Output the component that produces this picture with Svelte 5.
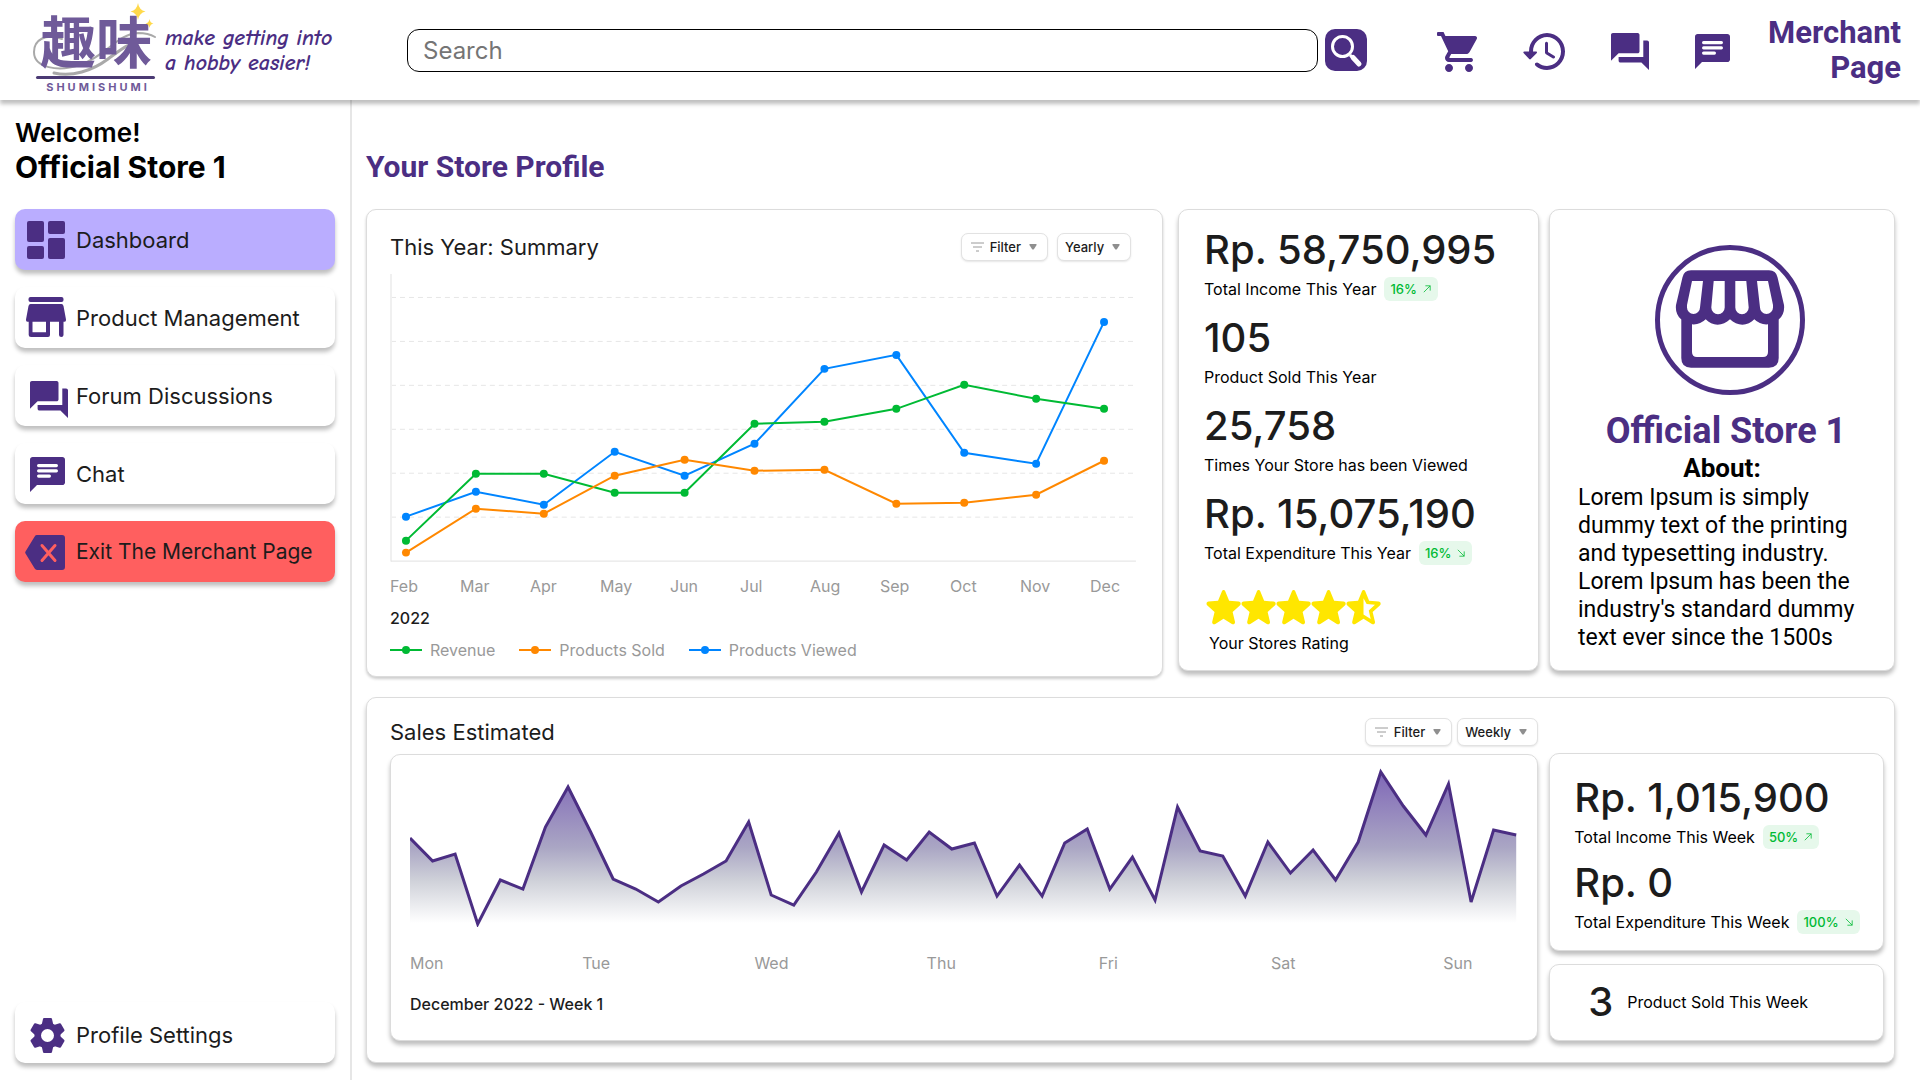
<script>
  const months = ['Feb', 'Mar', 'Apr', 'May', 'Jun', 'Jul', 'Aug', 'Sep', 'Oct', 'Nov', 'Dec'];
  const days = ['Mon', 'Tue', 'Wed', 'Thu', 'Fri', 'Sat', 'Sun'];

  const xs = [16, 86, 154, 225, 295, 365, 435, 507, 575, 647, 715];
  const series = [
    { name: 'Products Viewed', color: '#0085ff', ys: [244, 219, 232, 179, 203, 171, 96, 82, 180, 191, 49] },
    { name: 'Revenue', color: '#00ba34', ys: [268, 201, 201, 220, 220, 151, 149, 136, 112, 126, 136] },
    { name: 'Products Sold', color: '#ff8800', ys: [280, 236, 241, 203, 187, 198, 197, 231, 230, 222, 188] }
  ];
  const legend = [series[1], series[2], series[0]];
  const gridLines = [25, 69, 113, 157, 201, 245];

  const sales = [
    83, 106, 99, 169, 125, 134, 72, 32, 77, 124, 134, 147, 131, 119, 106, 67, 140, 150, 117, 78,
    137, 90, 105, 77, 94, 88, 141, 110, 141, 88, 74, 134, 102, 145, 52, 96, 101, 141, 87, 118,
    95, 125, 87, 17, 51, 80, 29, 147, 75, 80
  ];
  const salesPoints = sales.map((y, i) => `${((i * 1106) / 49).toFixed(1)},${y}`).join(' ');

  const yearly = [
    { value: 'Rp. 58,750,995', label: 'Total Income This Year', change: '16%', up: true },
    { value: '105', label: 'Product Sold This Year' },
    { value: '25,758', label: 'Times Your Store has been Viewed' },
    { value: 'Rp. 15,075,190', label: 'Total Expenditure This Year', change: '16%', up: false }
  ];
  const weekly = [
    { value: 'Rp. 1,015,900', label: 'Total Income This Week', change: '50%', up: true },
    { value: 'Rp. 0', label: 'Total Expenditure This Week', change: '100%', up: false }
  ];

  const menu = [
    { label: 'Dashboard', icon: 'dashboard', tone: 'active' },
    { label: 'Product Management', icon: 'store', tone: '' },
    { label: 'Forum Discussions', icon: 'forum', tone: '' },
    { label: 'Chat', icon: 'chat', tone: '' },
    { label: 'Exit The Merchant Page', icon: 'exit', tone: 'danger' }
  ];

  const starPath =
    'M12 17.3l-4.2 2.6c-.9.5-1.8-.1-1.6-1.1l1.2-4.8-3.7-3.2c-.8-.7-.4-1.8.6-1.9l4.9-.4 1.9-4.5c.4-1 1.5-1 1.9 0l1.9 4.5 4.9.4c1 .1 1.400 1.200.6 1.900l-3.700 3.200 1.200 4.800c.2 1-.7 1.600-1.600 1.100z';
</script>

{#snippet forumShape()}
  <path d="M21 6h-2v9H6v2c0 .55.45 1 1 1h11l4 4V7c0-.55-.45-1-1-1zm-4 6V3c0-.55-.45-1-1-1H3c-.55 0-1 .45-1 1v14l4-4h10c.55 0 1-.45 1-1z" />
{/snippet}

{#snippet chatShape()}
  <path d="M20.500 2H3.500C2.700 2 2 2.700 2 3.500V22l4-4h14.500c.8 0 1.500-.7 1.500-1.500v-13c0-.8-.7-1.500-1.500-1.500z" />
  <g fill="#fff">
    <rect x="6" y="6" width="12" height="1.8" rx=".9" />
    <rect x="6" y="9" width="12" height="1.8" rx=".9" />
    <rect x="6" y="12" width="8" height="1.8" rx=".9" />
  </g>
{/snippet}

{#snippet menuIcon(name)}
  <svg class="menu-icon" viewBox="0 0 50 50" aria-hidden="true">
    {#if name === 'dashboard'}
      <rect x="6" y="6" width="17" height="21" rx="2" />
      <rect x="6" y="31" width="17" height="13" rx="2" />
      <rect x="27" y="6" width="17" height="13" rx="2" />
      <rect x="27" y="23" width="17" height="21" rx="2" />
    {:else if name === 'store'}
      <rect x="7.500" y="4" width="35" height="5" rx="2" />
      <path d="M9.500 11h31q1.500 0 2 2l2.500 13.500q.3 2.200-1.500 2.200h-1V42q0 2-2.200 2T38 42V28.700h-9V42q0 2-2 2H10q-2.300 0-2.300-2V28.700h-1.200q-1.800 0-1.500-2.200L7.500 13q.5-2 2-2zM11.500 28.700v10.600H25V28.700z" />
    {:else if name === 'forum'}
      <svg x="9" y="10" width="38" height="37" viewBox="2 2 20 20" preserveAspectRatio="none">{@render forumShape()}</svg>
    {:else if name === 'chat'}
      <svg x="9" y="8" width="35" height="35" viewBox="2 2 20 20">{@render chatShape()}</svg>
    {:else if name === 'exit'}
      <path d="M16 8h25q3 0 3 3v29q0 3-3 3H16q-1.500 0-2.300-1.400L4.500 26.500q-.7-1 0-2L13.700 9.400Q14.500 8 16 8z" />
      <path d="M21 18.500l13 15M34 18.500l-13 15" stroke="#ff5f5f" stroke-width="3" stroke-linecap="round" />
    {:else}
      <g transform="translate(26.500 25.500)">
        {#each [0, 60, 120, 180, 240, 300] as a}
          <path d="M-6 -10L-4.500 -16.500Q-4.300 -17.500 -3.500 -17.500H3.500Q4.300 -17.500 4.500 -16.500L6 -10Z" transform="rotate({a})" />
        {/each}
        <path fill-rule="evenodd" d="M0-13a13 13 0 1 0 0 26 13 13 0 1 0 0-26zM0-6.500a6.500 6.500 0 1 1 0 13 6.500 6.500 0 1 1 0-13z" />
      </g>
    {/if}
  </svg>
{/snippet}

{#snippet caret()}
  <svg class="caret" viewBox="0 0 9 7" aria-hidden="true"><path d="M1 0h7q1 .2.700 1.200L5.500 6q-1 1-2 0L.3 1.200Q0 .2 1 0z" /></svg>
{/snippet}

{#snippet filterButton()}
  <button class="control">
    <svg class="filter-icon" viewBox="0 0 13 10" aria-hidden="true"><path d="M0 1h13M2 5h9M5 9h3" /></svg>
    Filter
    {@render caret()}
  </button>
{/snippet}

{#snippet stat(item)}
  <div class="stat">
    <div class="value">{item.value}</div>
    <div class="stat-label">
      {item.label}
      {#if item.change}
        <span class="badge">
          {item.change}
          <svg viewBox="0 0 10 10" aria-hidden="true">
            {#if item.up}
              <path d="M1 9L9 1M3 1h6v6" />
            {:else}
              <path d="M1 1l8 8M9 3v6H3" />
            {/if}
          </svg>
        </span>
      {/if}
    </div>
  </div>
{/snippet}

<div class="page">
  <header>
    <a class="brand" href="#home">
      <svg class="logo" viewBox="0 0 130 96" role="img" aria-label="Shumishumi">
        <g fill="none" stroke="#a9a9a9" stroke-linecap="round">
          <path d="M31 37C14 31 3 38 3 50c0 16 24 20 46 13C77 53 86 32 107 31c6 0 12 1 17 4" stroke-width="2" />
          <path d="M23 71c18 4 38-2 54-14 15-11 20-16 39-19" stroke-width="3" />
        </g>
        <text class="kanji" x="9" y="61">趣味</text>
        <rect x="5" y="74" width="119" height="3" rx="1.500" fill="#4b3a74" />
        <text class="wordmark" x="67" y="89" text-anchor="middle">SHUMISHUMI</text>
        <path d="M107 1q1 7 7.500 8.500Q108 11 107 18q-1-7-7.500-8.500Q106 8 107 1zM118.500 17q.6 4 4 4.500-3.400.5-4 4.500-.6-4-4-4.500 3.400-.5 4-4.500z" fill="#ffd94a" />
      </svg>
      <span class="tagline">make getting into<br />a hobby easier!</span>
    </a>

    <form class="search" role="search">
      <input type="search" placeholder="Search" aria-label="Search" />
      <button type="button" aria-label="Search">
        <svg viewBox="0 0 42 42" aria-hidden="true">
          <circle cx="17.500" cy="17.500" r="10" />
          <path d="M25 26l3 3" />
          <path class="handle" d="M28 28.500l6 6.500" />
        </svg>
      </button>
    </form>

    <nav class="shortcuts" aria-label="Shortcuts">
      <a href="#cart" aria-label="Cart">
        <svg width="40" height="40" viewBox="1 2 20 20"><path d="M7 18c-1.100 0-1.990.9-1.990 2S5.900 22 7 22s2-.9 2-2-.9-2-2-2zM1.500 2q-.5 0-.5.500v1q0 .5.5.500H3l3.600 7.590-1.350 2.450C4.520 15.370 5.480 17 7 17h11.200q.8-.2.800-1t-.8-1H7.420c-.14 0-.25-.11-.25-.25l.03-.12.9-1.630h7.450c.75 0 1.410-.41 1.750-1.030l3.580-6.490A1 1 0 0 0 20 4H5.210l-.94-2zM17 18c-1.100 0-1.990.9-1.990 2s.89 2 1.990 2 2-.9 2-2-.9-2-2-2z" /></svg>
      </a>
      <a href="#history" aria-label="History">
        <svg width="42" height="37" viewBox="1 3 21 18" preserveAspectRatio="none"><path d="M13 3c-4.970 0-9 4.030-9 9H1.700q-.9.2-.3.900l2.700 2.800q.4.400.8 0l2.900-2.800q.5-.7-.2-.9H6c0-3.870 3.130-7 7-7s7 3.130 7 7-3.130 7-7 7c-1.600 0-3.100-.55-4.300-1.450q-.8-.5-1.450.1t.1 1.400C8.900 20.300 10.900 21 13 21c4.970 0 9-4.030 9-9s-4.030-9-9-9zm-1 5v4.500q0 .5.5.800l3.500 2.100q.6.200.9-.3t-.1-.9L13.500 12.250V8q-.2-.7-.75-.7T12 8z" /></svg>
      </a>
      <a href="#forum" aria-label="Forum">
        <svg width="38" height="37" viewBox="2 2 20 20" preserveAspectRatio="none">{@render forumShape()}</svg>
      </a>
      <a href="#chat" aria-label="Chat">
        <svg width="35" height="35" viewBox="2 2 20 20">{@render chatShape()}</svg>
      </a>
    </nav>

    <a class="merchant" href="#merchant">Merchant<br />Page</a>
  </header>

  <div class="body">
    <aside>
      <p class="welcome">Welcome!</p>
      <p class="store-name">Official Store 1</p>
      <nav class="menu" aria-label="Merchant menu">
        {#each menu as item}
          <a class="menu-item {item.tone}" href="#{item.icon}">{@render menuIcon(item.icon)}{item.label}</a>
        {/each}
        <a class="menu-item last" href="#settings">{@render menuIcon('gear')}Profile Settings</a>
      </nav>
    </aside>

    <main>
      <h1>Your Store Profile</h1>

      <div class="top-row">
        <section class="card summary">
          <div class="card-head">
            <h2>This Year: Summary</h2>
            <div class="controls">
              {@render filterButton()}
              <span class="control-select">
                <select class="control" aria-label="Summary period"><option>Yearly</option></select>
                {@render caret()}
              </span>
            </div>
          </div>
          <svg class="line-chart" viewBox="0 0 748 290" role="img" aria-label="Revenue, products sold and products viewed by month">
            <g fill="none" stroke="#e6e6e6">
              {#each gridLines as y}
                <path d="M1 {y - 0.5}H747" stroke-dasharray="5 4" />
              {/each}
              <path d="M1 1V289" stroke="#f0f0f0" stroke-width="2" />
              <path d="M1 288.500H747" stroke="#e2e2e2" />
            </g>
            {#each series as s}
              <polyline points={s.ys.map((y, i) => `${xs[i]},${y}`).join(' ')} fill="none" stroke={s.color} stroke-width="2" />
              {#each s.ys as y, i}
                <circle cx={xs[i]} cy={y} r="4" fill={s.color} />
              {/each}
            {/each}
          </svg>
          <div class="months">
            {#each months as m}<span>{m}</span>{/each}
          </div>
          <div class="period">2022</div>
          <ul class="legend">
            {#each legend as s}
              <li>
                <svg viewBox="0 0 32 8" aria-hidden="true"><path d="M0 4h32" stroke={s.color} stroke-width="2" /><circle cx="16" cy="4" r="4" fill={s.color} /></svg>
                {s.name}
              </li>
            {/each}
          </ul>
        </section>

        <div class="side-cards">
          <section class="card stats">
            {#each yearly as item}{@render stat(item)}{/each}
            <div class="rating">
              <div class="stars" role="img" aria-label="4.5 out of 5">
                {#each [0, 1, 2, 3] as n}
                  <svg viewBox="3 3.200 18 17.200" preserveAspectRatio="none"><path d={starPath} /></svg>
                {/each}
                <svg viewBox="3 3.200 18 17.200" preserveAspectRatio="none">
                  <path fill-rule="evenodd" d="{starPath}M12 7.200V15.300l3.700 2.200-1-4.200 3.200-2.800-4.300-.4z" />
                </svg>
              </div>
              <div class="rating-label">Your Stores Rating</div>
            </div>
          </section>

          <section class="card profile">
            <svg class="avatar" viewBox="0 0 150 150" aria-hidden="true">
              <circle cx="75" cy="75" r="72.500" fill="none" stroke="#4b2e83" stroke-width="5" />
              <path fill-rule="evenodd" d="M36 25.300H114Q121 25.300 122.500 32.300L129 60Q130 69 123.700 74.500V113Q123.700 122.700 114 122.700H36Q26.300 122.700 26.300 113V74.500Q20 69 21 60L27.500 32.300Q29 25.300 36 25.300Z
                M37 36H48L45 62.500a6.500 6.500 0 0 1-13 0V60Z
                M58.700 36H69.700V62.500a6.700 6.700 0 0 1-13.400 0Z
                M80.300 36H91.300L93.700 62.500a6.700 6.700 0 0 1-13.400 0Z
                M102 36H113L118 60V62.500a6.500 6.500 0 0 1-13 0Z
                M37 79.300Q45 80 50.700 74.300C57 81.500 68 81.500 75 74.300C82 81.500 93 81.500 99.300 74.300Q105 80 113 79.300V107Q113 112 108 112H42Q37 112 37 107Z" />
            </svg>
            <h2 class="profile-name">Official Store 1</h2>
            <h3>About:</h3>
            <p>Lorem Ipsum is simply dummy text of the printing and typesetting industry. Lorem Ipsum has been the industry's standard dummy text ever since the 1500s</p>
          </section>
        </div>
      </div>

      <section class="card sales">
        <div class="sales-left">
          <div class="sales-head">
            <h2>Sales Estimated</h2>
            <div class="controls tight">
              {@render filterButton()}
              <span class="control-select">
                <select class="control wide" aria-label="Sales period"><option>Weekly</option></select>
                {@render caret()}
              </span>
            </div>
          </div>
          <div class="card sales-chart">
            <svg class="area-chart" viewBox="0 0 1107 172" role="img" aria-label="Estimated sales by day">
              <defs>
                <linearGradient id="area-fill" gradientUnits="userSpaceOnUse" x1="0" y1="17" x2="0" y2="168">
                  <stop offset="0" stop-color="#7f67b7" />
                  <stop offset=".5" stop-color="#aaa6c4" />
                  <stop offset=".72" stop-color="#cfd1d9" />
                  <stop offset="1" stop-color="#fff" />
                </linearGradient>
              </defs>
              <polygon points="0,168 {salesPoints} 1106,168" fill="url(#area-fill)" />
              <polyline points={salesPoints} fill="none" stroke="#4b2e83" stroke-width="3" />
            </svg>
            <div class="days">
              {#each days as d}<span>{d}</span>{/each}
            </div>
            <div class="period week">December 2022 - Week 1</div>
          </div>
        </div>
        <div class="sales-right">
          <div class="card week-stats">
            {#each weekly as item}{@render stat(item)}{/each}
          </div>
          <div class="card sold">
            <span class="value">3</span>
            <span>Product Sold This Week</span>
          </div>
        </div>
      </section>
    </main>
  </div>
</div>

<style>
  :global(body) {
    margin: 0;
    background: #fff;
  }
  .page,
  .page * {
    box-sizing: border-box;
  }
  .page {
    min-height: 100vh;
    display: flex;
    flex-direction: column;
    font-family: Inter, 'Liberation Sans', sans-serif;
    font-optical-sizing: none;
    font-size: 16px;
    line-height: 24px;
    color: #000;
  }
  .page a {
    color: inherit;
    text-decoration: none;
  }
  h1, h2, h3, p, ul {
    margin: 0;
    padding: 0;
    font-weight: 400;
  }
  button, input, select {
    font-family: inherit;
    margin: 0;
  }
  svg {
    display: block;
    flex: none;
    fill: #4b2e83;
  }

  header {
    height: 100px;
    display: flex;
    align-items: center;
    padding: 0 19px 0 31px;
    box-shadow: 0 4px 4px rgba(0, 0, 0, 0.25);
    position: relative;
  }
  .brand {
    display: flex;
    align-items: center;
    gap: 4px;
    width: 376px;
    flex: none;
  }
  .logo {
    width: 130px;
    height: 96px;
    overflow: visible;
  }
  .kanji {
    font: 700 56px 'Noto Sans CJK JP', sans-serif;
    fill: #6f5a99;
  }
  .wordmark {
    font: 700 11px Inter, sans-serif;
    letter-spacing: 3px;
    fill: #6f5a99;
  }
  .tagline {
    padding-top: 2px;
    font: italic 700 22px/25px 'Comic Neue', 'Comic Sans MS', 'Open Sans', sans-serif;
    color: #4b2e83;
    white-space: nowrap;
  }
  .search {
    flex: 1;
    display: flex;
    gap: 7px;
  }
  .search input {
    flex: 1;
    min-width: 0;
    height: 43px;
    border: 1px solid #000;
    border-radius: 12px;
    padding: 0 15px;
    font-size: 24px;
    background: #fff;
    appearance: none;
    outline: none;
  }
  .search input::placeholder {
    color: #757575;
    opacity: 1;
  }
  .search button {
    width: 42px;
    height: 42px;
    border: 0;
    border-radius: 10px;
    padding: 0;
    background: #4b2e83;
  }
  .search svg {
    fill: none;
    stroke: #fff;
    stroke-width: 3;
  }
  .search .handle {
    stroke-width: 5;
    stroke-linecap: round;
  }
  .shortcuts {
    display: flex;
    align-items: center;
    gap: 46px;
    margin-left: 70px;
    padding-top: 3px;
  }
  .merchant {
    margin-left: 38px;
    font: 700 31px/35px Roboto, sans-serif;
    text-align: right;
  }
  .page .merchant {
    color: #4b2e83;
  }

  .body {
    flex: 1;
    display: flex;
  }
  aside {
    width: 352px;
    flex: none;
    padding: 17px 15px 17px 15px;
    border-right: 2px solid #e6e6e6;
    display: flex;
    flex-direction: column;
  }
  .welcome {
    font-size: 26px;
    line-height: 32px;
    font-weight: 600;
  }
  .store-name {
    font-size: 30px;
    line-height: 36px;
    font-weight: 700;
  }
  .menu {
    flex: 1;
    display: flex;
    flex-direction: column;
    gap: 17px;
    margin-top: 24px;
  }
  .menu-item {
    height: 61px;
    display: flex;
    align-items: center;
    gap: 5px;
    padding-left: 6px;
    border-radius: 10px;
    background: #fff;
    box-shadow: 0 4px 4px rgba(0, 0, 0, 0.25);
    font-size: 22px;
  }
  .page .menu-item {
    color: #1c1c1c;
  }
  .menu-icon {
    width: 50px;
    height: 50px;
  }
  .active {
    background: #baadff;
  }
  .danger {
    background: #ff5f5f;
    font-size: 21px;
  }
  .last {
    margin-top: auto;
    padding-top: 4px;
  }

  main {
    flex: 1;
    min-width: 0;
    padding: 49px 25px 17px 14px;
  }
  h1 {
    font: 700 30px/36px Roboto, sans-serif;
    color: #4b2e83;
    margin-bottom: 24px;
  }
  .card {
    border: 1px solid #dcdcdc;
    border-radius: 10px;
    background: #fff;
    box-shadow: 0 4px 4px rgba(0, 0, 0, 0.25);
  }
  .top-row {
    display: grid;
    grid-template-columns: 797fr 717fr;
    gap: 15px;
    align-items: start;
    margin-bottom: 20px;
  }
  .side-cards {
    display: grid;
    grid-template-columns: 361fr 346fr;
    gap: 10px;
  }
  .summary {
    padding: 23px 25px 14px 23px;
    box-shadow: 0 2px 3px rgba(0, 0, 0, 0.2);
  }
  .card-head,
  .sales-head {
    display: flex;
    justify-content: space-between;
    align-items: center;
    height: 28px;
  }
  .card-head {
    padding-right: 6px;
    margin-bottom: 12px;
  }
  .sales-head {
    margin-bottom: 8px;
  }
  h2 {
    font-size: 22px;
    color: #1c1c1c;
  }
  .controls {
    display: flex;
    gap: 9px;
  }
  .tight {
    gap: 5px;
  }
  .control {
    height: 28px;
    display: flex;
    align-items: center;
    gap: 6px;
    padding: 0 10px 0 9px;
    border: 1px solid #e2e2e2;
    border-radius: 7px;
    background: #fff;
    box-shadow: 0 1px 2px rgba(0, 0, 0, 0.1);
    font-size: 13px;
    font-weight: 500;
    color: #1c1c1c;
  }
  .control .caret {
    margin-left: 2px;
  }
  .control-select {
    display: grid;
    align-items: center;
  }
  .control-select > :global(*) {
    grid-area: 1 / 1;
  }
  .control-select .caret {
    justify-self: end;
    margin-right: 11px;
    pointer-events: none;
  }
  select.control {
    appearance: none;
    width: 74px;
    padding: 0 0 0 7px;
  }
  select.wide {
    width: 81px;
  }
  .caret {
    width: 8px;
    height: 6px;
    fill: #8f8f8f;
  }
  .filter-icon {
    width: 13px;
    height: 10px;
    fill: none;
    stroke: #9a9a9a;
    stroke-width: 1;
  }
  .line-chart,
  .area-chart {
    width: 100%;
    height: auto;
  }
  .months,
  .days {
    display: grid;
    color: #999;
  }
  .months {
    grid-template-columns: repeat(10, 1fr) 30px;
    margin: 11px 17px 8px 0;
  }
  .days {
    grid-template-columns: repeat(6, 1fr) 30px;
    margin: 24px 44px 17px 0;
  }
  .period {
    color: #1c1c1c;
    font-weight: 500;
  }
  .legend {
    list-style: none;
    display: flex;
    gap: 24px;
    margin-top: 8px;
    color: #999;
  }
  .legend li {
    display: flex;
    align-items: center;
    gap: 8px;
  }
  .legend svg {
    width: 32px;
    height: 8px;
  }

  .stats {
    display: flex;
    flex-direction: column;
    gap: 12px;
    padding: 15px 24px 15px 25px;
  }
  .value {
    font-size: 40px;
    line-height: 50px;
    font-weight: 500;
    color: #1c1c1c;
  }
  .stat-label {
    display: flex;
    align-items: center;
    gap: 8px;
    height: 24px;
    margin-top: 2px;
    white-space: nowrap;
  }
  .badge {
    display: flex;
    align-items: center;
    gap: 6px;
    height: 24px;
    padding: 0 7px 0 6px;
    border-radius: 6px;
    background: #e6f8eb;
    color: #00ba34;
    font-size: 13px;
    font-weight: 500;
  }
  .badge svg {
    width: 8px;
    height: 8px;
    fill: none;
    stroke: #00ba34;
    stroke-width: 1;
  }
  .rating {
    margin-top: 13px;
    padding-left: 2px;
  }
  .stars {
    display: flex;
    margin-bottom: 6px;
  }
  .stars svg {
    width: 35px;
    height: 35px;
    fill: #ffe600;
  }
  .rating-label {
    padding-left: 3px;
  }

  .profile {
    display: flex;
    flex-direction: column;
    align-items: center;
    padding: 35px 28px 15px;
    font-family: Roboto, sans-serif;
  }
  .avatar {
    width: 150px;
    height: 150px;
    margin-left: 16px;
  }
  .profile-name {
    margin-top: 16px;
    padding-left: 8px;
    font-size: 36px;
    line-height: 40px;
    font-weight: 700;
    color: #4b2e83;
  }
  h3 {
    margin: 3px 0 2px;
    font-size: 26px;
    line-height: 28px;
    font-weight: 700;
  }
  .profile p {
    width: 100%;
    font-size: 23px;
    line-height: 28px;
  }

  .sales {
    display: grid;
    grid-template-columns: minmax(0, 1149fr) minmax(0, 335fr);
    gap: 11px;
    padding: 20px 10px 21px 23px;
  }
  .sales-chart {
    padding: 0 20px 24px 19px;
  }
  .sales-right {
    display: flex;
    flex-direction: column;
    gap: 13px;
    padding-top: 35px;
  }
  .week-stats {
    display: flex;
    flex-direction: column;
    gap: 9px;
    padding: 19px 20px 16px 24px;
  }
  .sold {
    flex: 1;
    display: flex;
    align-items: center;
    gap: 14px;
    padding-left: 38px;
  }
</style>
